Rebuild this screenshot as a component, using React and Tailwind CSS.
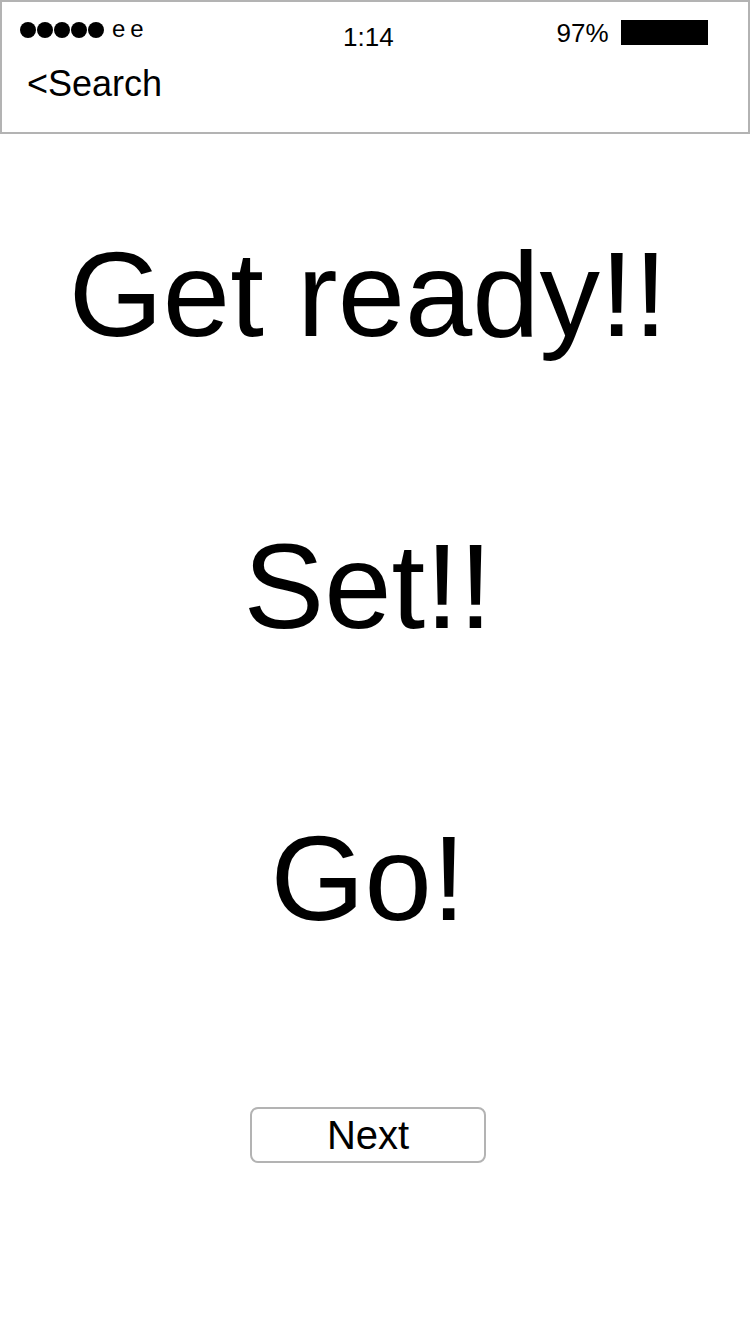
import React from "react";

export default function App() {
  const dots = [0, 1, 2, 3, 4];

  return (
    <div className="w-[750px] min-h-[1334px] bg-white text-black font-['Liberation_Sans',Arial,sans-serif]">
      <header className="h-[134px] border-2 border-[#b3b3b3]">
        <div className="flex items-start h-[52px]">
          <div className="flex items-start w-[130px] ml-[18px] mt-[19px]">
            <div className="flex gap-[1px] mt-[1px]">
              {dots.map((d) => (
                <span key={d} className="block w-[16px] h-[16px] rounded-full bg-black" />
              ))}
            </div>
            <span className="ml-[8px] -mt-[4px] text-[24px] leading-none tracking-[5px]">ee</span>
          </div>
          <div className="ml-[193px] mt-[22px] text-[26px] leading-none">1:14</div>
          <div className="flex items-start ml-[163px] mt-[18px]">
            <span className="text-[26px] leading-none">97%</span>
            <span className="block ml-[12px] w-[87px] h-[25px] bg-black" />
          </div>
        </div>
        <div className="ml-[25px] mt-[12px] text-[36px] leading-none">&lt;Search</div>
      </header>

      <main className="w-[736px] flex flex-col items-center">
        <div className="mt-[100px] flex flex-col items-center gap-[171px] text-[121px] leading-none">
          <h1>Get ready!!</h1>
          <h2>Set!!</h2>
          <h2>Go!</h2>
        </div>
        <button className="mt-[168px] w-[236px] h-[56px] flex items-center justify-center border-2 border-[#b3b3b3] rounded-[8px] bg-white text-[40px] leading-none">
          Next
        </button>
      </main>
    </div>
  );
}
